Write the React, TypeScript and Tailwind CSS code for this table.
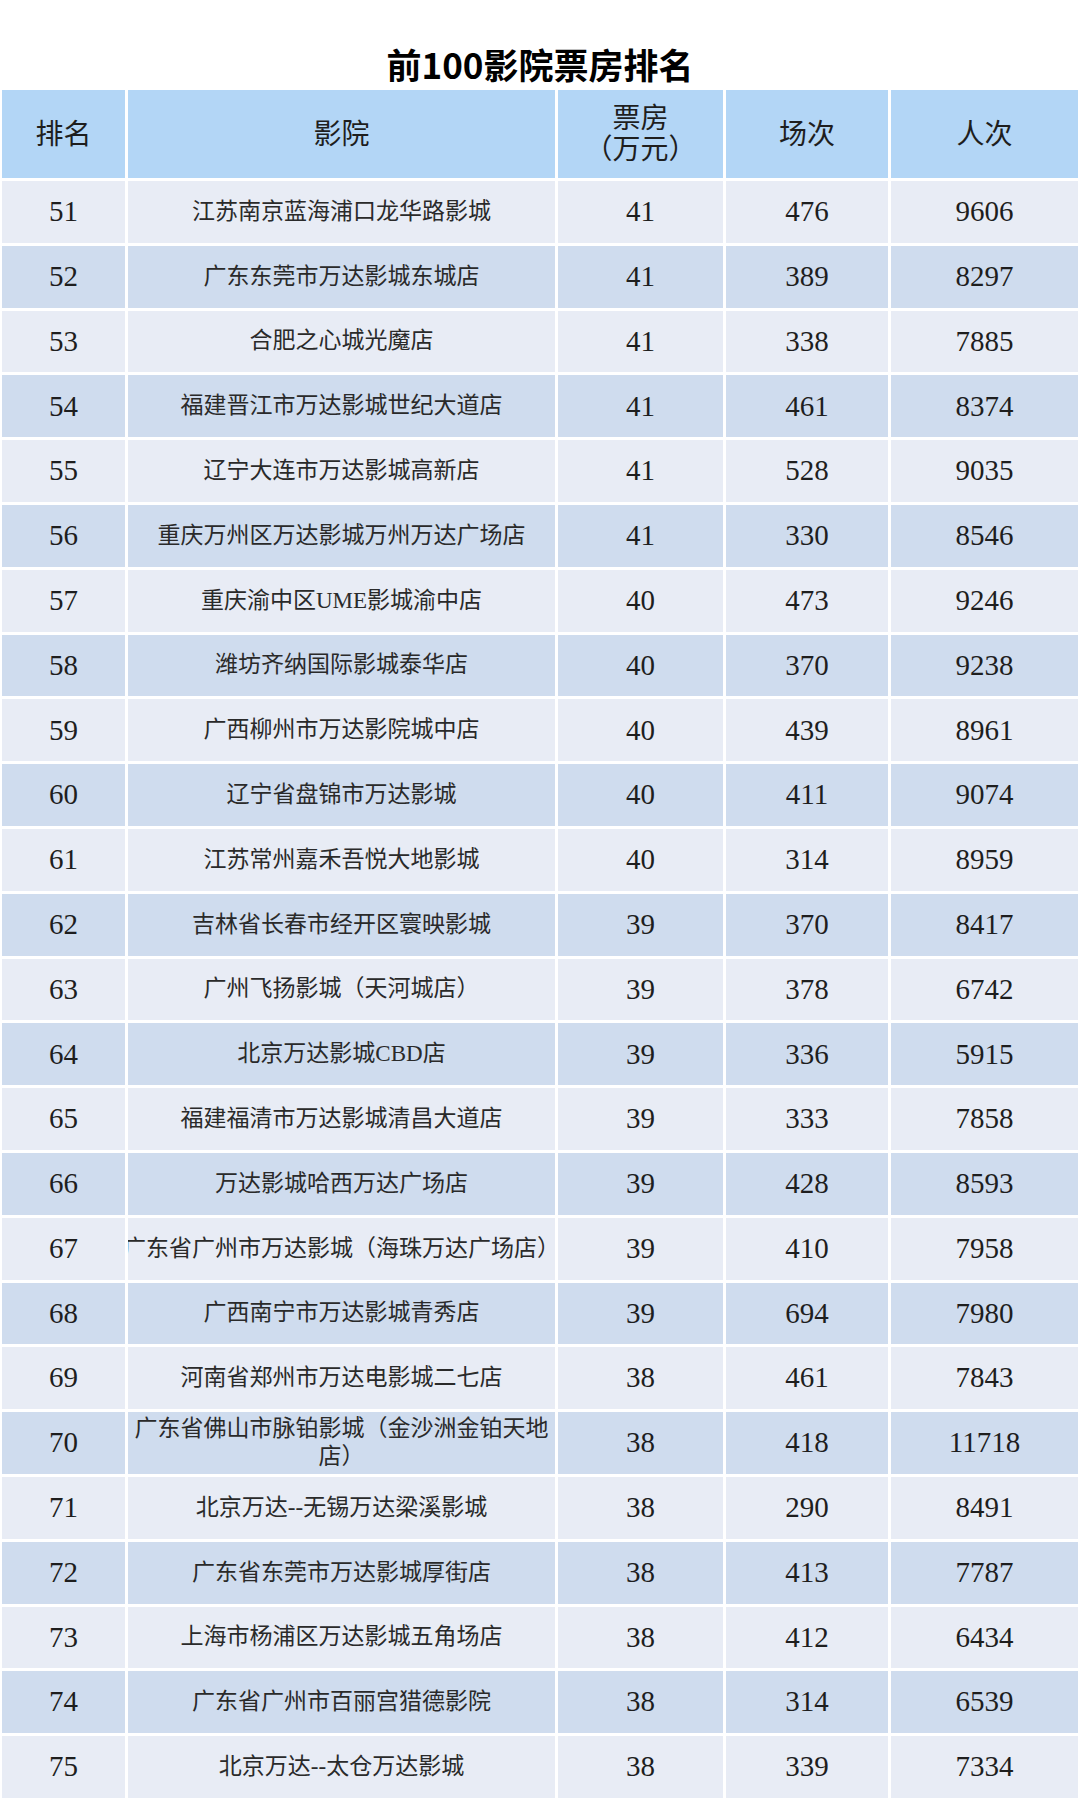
const ROWS: [number, string, number, number, number][] = [
  [51, "江苏南京蓝海浦口龙华路影城", 41, 476, 9606],
  [52, "广东东莞市万达影城东城店", 41, 389, 8297],
  [53, "合肥之心城光魔店", 41, 338, 7885],
  [54, "福建晋江市万达影城世纪大道店", 41, 461, 8374],
  [55, "辽宁大连市万达影城高新店", 41, 528, 9035],
  [56, "重庆万州区万达影城万州万达广场店", 41, 330, 8546],
  [57, "重庆渝中区UME影城渝中店", 40, 473, 9246],
  [58, "潍坊齐纳国际影城泰华店", 40, 370, 9238],
  [59, "广西柳州市万达影院城中店", 40, 439, 8961],
  [60, "辽宁省盘锦市万达影城", 40, 411, 9074],
  [61, "江苏常州嘉禾吾悦大地影城", 40, 314, 8959],
  [62, "吉林省长春市经开区寰映影城", 39, 370, 8417],
  [63, "广州飞扬影城（天河城店）", 39, 378, 6742],
  [64, "北京万达影城CBD店", 39, 336, 5915],
  [65, "福建福清市万达影城清昌大道店", 39, 333, 7858],
  [66, "万达影城哈西万达广场店", 39, 428, 8593],
  [67, "广东省广州市万达影城（海珠万达广场店）", 39, 410, 7958],
  [68, "广西南宁市万达影城青秀店", 39, 694, 7980],
  [69, "河南省郑州市万达电影城二七店", 38, 461, 7843],
  [70, "广东省佛山市脉铂影城（金沙洲金铂天地店）", 38, 418, 11718],
  [71, "北京万达--无锡万达梁溪影城", 38, 290, 8491],
  [72, "广东省东莞市万达影城厚街店", 38, 413, 7787],
  [73, "上海市杨浦区万达影城五角场店", 38, 412, 6434],
  [74, "广东省广州市百丽宫猎德影院", 38, 314, 6539],
  [75, "北京万达--太仓万达影城", 38, 339, 7334],
];

const SERIF = "font-['Liberation_Serif','Noto_Sans_CJK_SC',serif]";

function HeadCell({ children }: { children: React.ReactNode }) {
  return (
    <div className="flex h-[88px] flex-col items-center justify-center bg-[#b3d6f6] text-[28px] leading-[31px] text-[#1e1e1e]">
      {children}
    </div>
  );
}

export default function App() {
  return (
    <div className={`min-h-[1800px] w-[1080px] bg-white [text-spacing-trim:space-all] ${SERIF}`}>
      {/* title */}
      <div className="flex h-[90px] justify-center pt-[42px]">
        <h1 className="font-['Noto_Sans_CJK_SC',sans-serif] text-[35px] font-bold leading-[44px] text-black">
          前100影院票房排名
        </h1>
      </div>

      {/* table */}
      <div className="grid grid-cols-[123px_427px_165px_162px_187px] gap-[3px] pl-[2px]">
        <HeadCell>排名</HeadCell>
        <HeadCell>影院</HeadCell>
        <HeadCell>
          <span>票房</span>
          <span>（万元）</span>
        </HeadCell>
        <HeadCell>场次</HeadCell>
        <HeadCell>人次</HeadCell>

        {ROWS.map(([rank, name, box, shows, people], i) => {
          const bg = i % 2 === 0 ? "bg-[#e8ecf5]" : "bg-[#cfdcee]";
          const num = `flex h-[61.8px] items-center justify-center text-[29px] text-[#1e1e1e] ${bg}`;
          return (
            <div key={rank} className="contents">
              <div className={num}>{rank}</div>
              <div
                className={`flex h-[61.8px] items-center justify-center overflow-hidden text-center text-[23px] leading-[28px] text-[#2a2a2a] ${bg}`}
              >
                <span className={name.length > 19 ? "" : "whitespace-nowrap"}>{name}</span>
              </div>
              <div className={num}>{box}</div>
              <div className={num}>{shows}</div>
              <div className={num}>{people}</div>
            </div>
          );
        })}
      </div>
    </div>
  );
}
